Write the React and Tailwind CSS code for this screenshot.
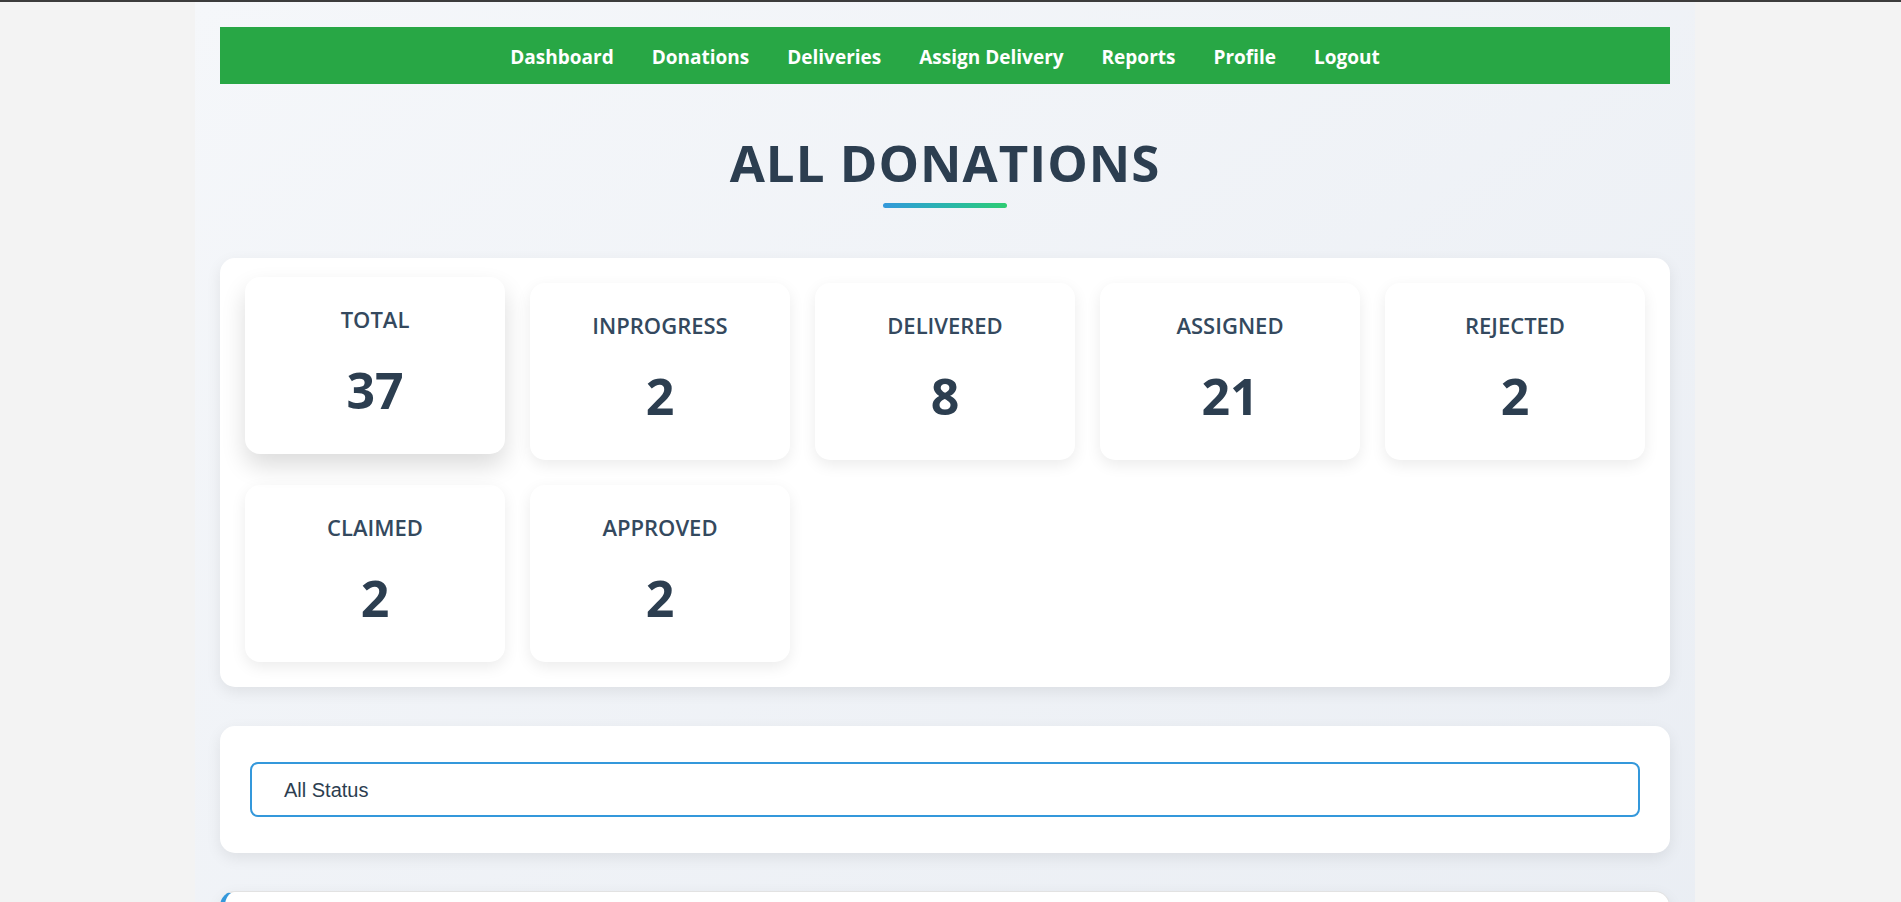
const stats = [
  { label: 'TOTAL', value: 37, hover: true },
  { label: 'INPROGRESS', value: 2 },
  { label: 'DELIVERED', value: 8 },
  { label: 'ASSIGNED', value: 21 },
  { label: 'REJECTED', value: 2 },
  { label: 'CLAIMED', value: 2 },
  { label: 'APPROVED', value: 2 },
]

const links = ['Dashboard', 'Donations', 'Deliveries', 'Assign Delivery', 'Reports', 'Profile', 'Logout']

const StatCard = ({ label, value, hover }) => (
  <div
    className={`flex h-[177px] w-[260px] flex-col items-center rounded-[15px] bg-white pt-[31px] ${
      hover
        ? '-translate-y-[6px] shadow-[0_12px_24px_rgba(0,0,0,0.14)]'
        : 'shadow-[0_5px_15px_rgba(0,0,0,0.08)]'
    }`}
  >
    <p className="text-[22px] font-semibold leading-none text-[#34495e]">{label}</p>
    <p className="mt-[35px] text-[50px] font-bold leading-none text-[#2c3e50]">{value}</p>
  </div>
)

export default function App() {
  return (
    <div className="min-h-screen bg-[#f3f3f3] font-['Open_Sans',sans-serif]">
      <div className="h-[2px] bg-[#3c3c3c]" />
      <div className="ml-[195px] min-h-[900px] w-[1500px] bg-gradient-to-br from-[#f5f7fa] to-[#e9edf3] px-[25px] pt-[25px]">
        <nav className="flex h-[57px] items-center justify-center gap-[38px] bg-[#28a745] pt-[4px]">
          {links.map((l) => (
            <a key={l} className="text-[19px] font-bold text-white">
              {l}
            </a>
          ))}
        </nav>

        <h1 className="mt-[53px] text-center text-[51px] font-bold leading-none tracking-[1px] text-[#2c3e50]">
          ALL DONATIONS
        </h1>
        <div className="mx-auto mt-[15px] h-[5px] w-[124px] rounded-full bg-gradient-to-r from-[#3498db] to-[#2ecc71]" />

        <section className="mt-[50px] rounded-[15px] bg-white p-[25px] shadow-[0_5px_15px_rgba(0,0,0,0.08)]">
          <div className="grid grid-cols-5 gap-[25px]">
            {stats.map((s) => (
              <StatCard key={s.label} {...s} />
            ))}
          </div>
        </section>

        <section className="mt-[39px] rounded-[15px] bg-white px-[30px] py-[36px] shadow-[0_5px_15px_rgba(0,0,0,0.08)]">
          <div className="flex h-[55px] items-center rounded-[8px] border-2 border-[#3498db] pl-[32px] font-['Liberation_Sans',Arial,sans-serif] text-[20px] text-[#2c3e50]">
            All Status
          </div>
        </section>

        <section className="mt-[38px] h-[200px] rounded-[15px] border border-l-[5px] border-[#e2e2e2] border-l-[#3498db] bg-white shadow-[0_5px_15px_rgba(0,0,0,0.08)]" />
      </div>
    </div>
  )
}
